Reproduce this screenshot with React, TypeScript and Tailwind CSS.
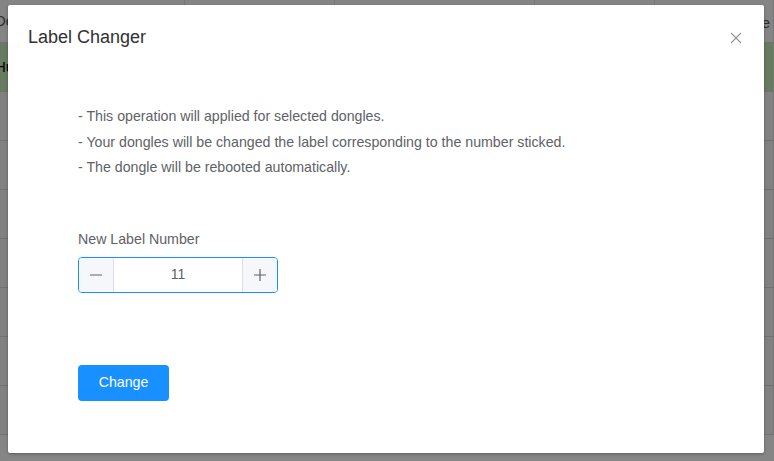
const font = { fontFamily: '"Liberation Sans", Arial, sans-serif' };

const cols = ["w-[185px]", "w-[150px]", "w-[200px]", "w-[120px]", "flex-1"];

function Row({ tall, green, cells }: { tall?: boolean; green?: boolean; cells?: string[] }) {
  return (
    <div className={`flex border-b border-[#d9d9d9] ${tall ? "h-[43px] bg-[#fdfdfd]" : "h-[49px]"} ${green ? "bg-[#c6ecbb]" : tall ? "" : "bg-[#f7f7f7]"}`}>
      {cols.map((c, i) => (
        <div key={i} className={`${c} border-r border-[#e4e4e4] flex items-center overflow-hidden text-[15px] ${green ? "text-black" : "text-[#555]"}`}>
          {cells && cells[i] && <span className="-ml-[5px]">{cells[i]}</span>}
        </div>
      ))}
    </div>
  );
}

export default function App() {
  return (
    <div className="relative w-[774px] h-[461px] overflow-hidden" style={font}>
      {/* table behind the dialog */}
      <div className="flex flex-col">
        <Row tall cells={["Do", "", "", "", ""]} />
        <Row green cells={["Hu", "", "", "", ""]} />
        <Row />
        <Row />
        <Row />
        <Row />
        <Row />
        <Row />
        <Row />
      </div>
      <div className="absolute right-[4px] top-[12px] text-[15px] text-[#555]">e</div>

      <div className="absolute inset-0 bg-black/[0.48]" />

      <div className="absolute left-[8px] top-[5px] w-[756px] h-[448px] bg-white rounded-[2px] shadow-[0_1px_3px_rgba(0,0,0,0.3)]">
        <div className="pt-[20px] px-[20px]">
          <div className="h-[24px] leading-[24px] text-[18px] text-[#303133]">Label Changer</div>
        </div>
        <button className="absolute top-[25px] right-[20px] w-[16px] h-[16px] flex items-center justify-center text-[#909399]">
          <svg width="12" height="12" viewBox="0 0 12 12" fill="none" stroke="currentColor" strokeWidth="1.1">
            <path d="M1 1 L11 11 M11 1 L1 11" />
          </svg>
        </button>

        <div className="pl-[70px] pr-[20px]">
          <div className="mt-[55px] text-[14.2px] leading-[25.5px] text-[#606266]">
            <div>- This operation will applied for selected dongles.</div>
            <div>- Your dongles will be changed the label corresponding to the number sticked.</div>
            <div>- The dongle will be rebooted automatically.</div>
          </div>

          <div className="mt-[48px] text-[14.2px] leading-[20px] text-[#606266]">New Label Number</div>
          <div className="mt-[8px] flex w-[200px] h-[36px] border border-[#1890ff] rounded-[4px] overflow-hidden">
            <div className="w-[35px] bg-[#f5f7fa] border-r border-[#dcdfe6] flex items-center justify-center text-[#606266]">
              <svg width="12" height="12" viewBox="0 0 12 12" stroke="currentColor" strokeWidth="1.2">
                <path d="M0 6 H12" />
              </svg>
            </div>
            <div className="flex-1 flex items-center justify-center text-[14px] text-[#606266]">11</div>
            <div className="w-[35px] bg-[#f5f7fa] border-l border-[#dcdfe6] flex items-center justify-center text-[#606266]">
              <svg width="12" height="12" viewBox="0 0 12 12" stroke="currentColor" strokeWidth="1.2">
                <path d="M0 6 H12 M6 0 V12" />
              </svg>
            </div>
          </div>

          <button className="mt-[72px] w-[91px] h-[36px] pt-px rounded-[4px] bg-[#1890ff] text-white text-[14.2px]">Change</button>
        </div>
      </div>
    </div>
  );
}
